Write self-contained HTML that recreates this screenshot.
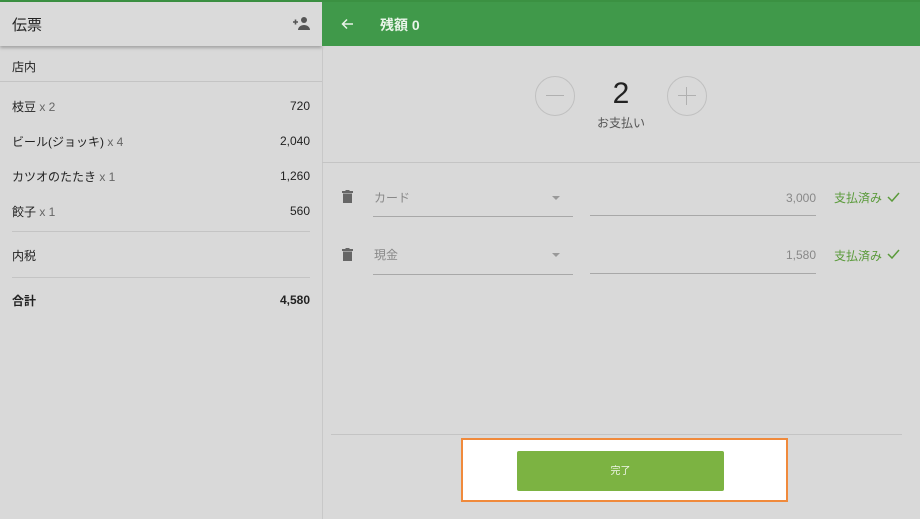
<!DOCTYPE html><html><head><meta charset="utf-8"><style>
*{margin:0;padding:0;box-sizing:border-box}
body{width:920px;height:519px;background:#d9d9d9;font-family:"Liberation Sans","Noto Sans CJK JP",sans-serif;position:relative;overflow:hidden;color:#222}
.a{position:absolute}
.t{font-size:12px;line-height:14px;margin-top:2px}
.g{color:#666}
.n{font-size:12px;line-height:14px;margin-top:1px}
</style></head><body>
<div class="a" style="left:0;top:0;width:920px;height:2px;background:#3b9142"></div>
<div class="a" style="left:0;top:2px;width:322px;height:44px;background:#dadada;box-shadow:0 2px 3px rgba(0,0,0,.25)"></div>
<div class="a" style="left:12px;top:17px;font-size:15px;line-height:18px;color:#222">伝票</div>
<svg class="a" style="left:292px;top:16px" width="19" height="14" viewBox="0 0 19 14"><path d="M1 6h5M3.5 3.5v5" stroke="#555" stroke-width="1.6"/><circle cx="12" cy="4" r="3" fill="#555"/><path d="M6 14c0-3 3-5 6-5s6 2 6 5z" fill="#555"/></svg>
<div class="a" style="left:322px;top:2px;width:598px;height:44px;background:#40994a"></div>
<svg class="a" style="left:341px;top:18px" width="13" height="12" viewBox="0 0 13 12"><path d="M12 6H2M6 1.5L1.5 6 6 10.5" stroke="#e8f3e8" stroke-width="1.5" fill="none"/></svg>
<div class="a" style="left:380px;top:16px;font-size:14px;line-height:18px;color:#eaf5ea;font-weight:bold">残額 0</div>
<div class="a" style="left:322px;top:46px;width:1px;height:473px;background:#c8c8c8"></div>
<div class="a t" style="left:12px;top:58px">店内</div>
<div class="a" style="left:0;top:81px;width:322px;height:1px;background:#c4c4c4"></div>
<div class="a t" style="left:12px;top:98px">枝豆 <span class="g">x 2</span></div><div class="a n" style="right:610px;top:98px">720</div>
<div class="a t" style="left:12px;top:133px">ビール(ジョッキ) <span class="g">x 4</span></div><div class="a n" style="right:610px;top:133px">2,040</div>
<div class="a t" style="left:12px;top:168px">カツオのたたき <span class="g">x 1</span></div><div class="a n" style="right:610px;top:168px">1,260</div>
<div class="a t" style="left:12px;top:203px">餃子 <span class="g">x 1</span></div><div class="a n" style="right:610px;top:203px">560</div>
<div class="a" style="left:12px;top:231px;width:298px;height:1px;background:#c4c4c4"></div>
<div class="a t" style="left:12px;top:247px">内税</div>
<div class="a" style="left:12px;top:277px;width:298px;height:1px;background:#c4c4c4"></div>
<div class="a t" style="left:12px;top:292px;font-weight:bold">合計</div><div class="a n" style="right:610px;top:292px;font-weight:bold">4,580</div>
<div class="a" style="left:535px;top:76px;width:40px;height:40px;border:1px solid #c0c0c0;border-radius:50%"></div>
<div class="a" style="left:546px;top:95px;width:18px;height:1px;background:#b0b0b0"></div>
<div class="a" style="left:667px;top:76px;width:40px;height:40px;border:1px solid #c0c0c0;border-radius:50%"></div>
<div class="a" style="left:678px;top:95px;width:18px;height:1px;background:#b0b0b0"></div>
<div class="a" style="left:686px;top:87px;width:1px;height:18px;background:#b0b0b0"></div>
<div class="a" style="left:600px;top:76px;width:42px;text-align:center;font-size:30px;line-height:36px;color:#222">2</div>
<div class="a t" style="left:590px;top:114px;width:62px;text-align:center;color:#555">お支払い</div>
<div class="a" style="left:322px;top:162px;width:598px;height:1px;background:#c4c4c4"></div>
<svg class="a" style="left:342px;top:190px" width="11" height="13" viewBox="0 0 11 13"><rect x="0" y="1" width="11" height="2" fill="#666"/><rect x="3.5" y="0" width="4" height="2" fill="#666"/><rect x="1" y="3.5" width="9" height="9.5" fill="#666"/></svg>
<div class="a t" style="left:374px;top:189px;color:#888">カード</div>
<div class="a" style="left:552px;top:196px;border:4px solid transparent;border-top:4px solid #999"></div>
<div class="a" style="left:373px;top:216px;width:200px;height:1px;background:#a8a8a8"></div>
<div class="a n" style="left:590px;top:190px;width:226px;text-align:right;color:#888">3,000</div>
<div class="a" style="left:590px;top:215px;width:226px;height:1px;background:#a8a8a8"></div>
<div class="a t" style="left:834px;top:189px;color:#5a9a3a">支払済み</div>
<svg class="a" style="left:887px;top:192px" width="13" height="10" viewBox="0 0 13 10"><path d="M1 5l4 4 7-8" stroke="#5a9a3a" stroke-width="1.5" fill="none"/></svg>
<svg class="a" style="left:342px;top:248px" width="11" height="13" viewBox="0 0 11 13"><rect x="0" y="1" width="11" height="2" fill="#666"/><rect x="3.5" y="0" width="4" height="2" fill="#666"/><rect x="1" y="3.5" width="9" height="9.5" fill="#666"/></svg>
<div class="a t" style="left:374px;top:246px;color:#888">現金</div>
<div class="a" style="left:552px;top:253px;border:4px solid transparent;border-top:4px solid #999"></div>
<div class="a" style="left:373px;top:274px;width:200px;height:1px;background:#a8a8a8"></div>
<div class="a n" style="left:590px;top:247px;width:226px;text-align:right;color:#888">1,580</div>
<div class="a" style="left:590px;top:273px;width:226px;height:1px;background:#a8a8a8"></div>
<div class="a t" style="left:834px;top:247px;color:#5a9a3a">支払済み</div>
<svg class="a" style="left:887px;top:249px" width="13" height="10" viewBox="0 0 13 10"><path d="M1 5l4 4 7-8" stroke="#5a9a3a" stroke-width="1.5" fill="none"/></svg>
<div class="a" style="left:331px;top:434px;width:571px;height:1px;background:#c4c4c4"></div>
<div class="a" style="left:461px;top:438px;width:327px;height:64px;background:#fff;border:2px solid #f08a3c"></div>
<div class="a" style="left:517px;top:451px;width:207px;height:40px;background:#7cb342;border-radius:2px;color:#f0f6e8;font-size:10px;text-align:center;line-height:42px">完了</div>
</body></html>
